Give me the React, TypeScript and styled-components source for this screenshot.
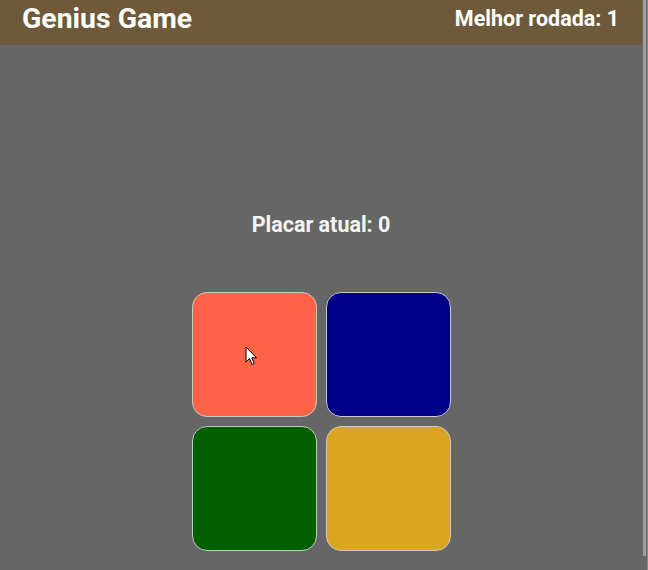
import React from "react";
import styled, { createGlobalStyle } from "styled-components";

const Global = createGlobalStyle`
  html, body { margin: 0; padding: 0; background: #666666; }
  body {
    font-family: Roboto, "Liberation Sans", Arial, sans-serif;
    color: #ffffff;
  }
`;

const Page = styled.div`
  margin-right: 6px;
`;

const Header = styled.header`
  height: 45px;
  background: #6e5a3a;
  display: flex;
  align-items: center;
  justify-content: space-between;
  padding: 0 23px 7px 22px;
  box-sizing: border-box;
`;

const Title = styled.h1`
  margin: 0;
  font-size: 28.4px;
  line-height: 32px;
  font-weight: 700;
  color: #ffffff;
`;

const Best = styled.span`
  font-size: 21.5px;
  line-height: 26px;
  font-weight: 700;
  color: #ffffff;
`;

const Main = styled.main`
  display: flex;
  flex-direction: column;
  align-items: center;
  padding: 167px 0 34px;
`;

const Score = styled.h2`
  margin: 0 0 55px;
  font-size: 21.5px;
  line-height: 25px;
  font-weight: 700;
  color: #f4f4f4;
`;

const Board = styled.div`
  display: grid;
  grid-template-columns: repeat(2, 125px);
  grid-auto-rows: 125px;
  gap: 9px 9px;
`;

const Pad = styled.button<{ $color: string }>`
  position: relative;
  width: 125px;
  height: 125px;
  padding: 0;
  background: ${(p) => p.$color};
  border: 1px solid #c8c8c8;
  border-radius: 15px;
  cursor: pointer;
`;

const Cursor = styled.svg`
  position: absolute;
  left: 52px;
  top: 53px;
  pointer-events: none;
`;

const ScrollTrack = styled.div`
  position: fixed;
  top: 0;
  right: 0;
  width: 5px;
  height: 100%;
  background: #666666;
  border-right: 1px solid #8a8a8a;
  box-sizing: border-box;
`;

const ScrollThumb = styled.div`
  width: 3px;
  height: 556px;
  background: #a0a0a0;
`;

export default function App() {
  return (
    <>
      <Global />
      <Page>
        <Header>
          <Title>Genius Game</Title>
          <Best>Melhor rodada: 1</Best>
        </Header>
        <Main>
          <Score>Placar atual: 0</Score>
          <Board>
            <Pad $color="#ff6347">
              <Cursor width="13" height="20" viewBox="0 0 13 20">
                <path d="M1 1 L1 16 L4.5 12.5 L7 18.5 L9.3 17.5 L6.8 11.8 L11.5 11.8 Z" fill="#ffffff" stroke="#000000" strokeWidth="1" />
              </Cursor>
            </Pad>
            <Pad $color="#000088" />
            <Pad $color="#006000" />
            <Pad $color="#daa520" />
          </Board>
        </Main>
      </Page>
      <ScrollTrack>
        <ScrollThumb />
      </ScrollTrack>
    </>
  );
}
